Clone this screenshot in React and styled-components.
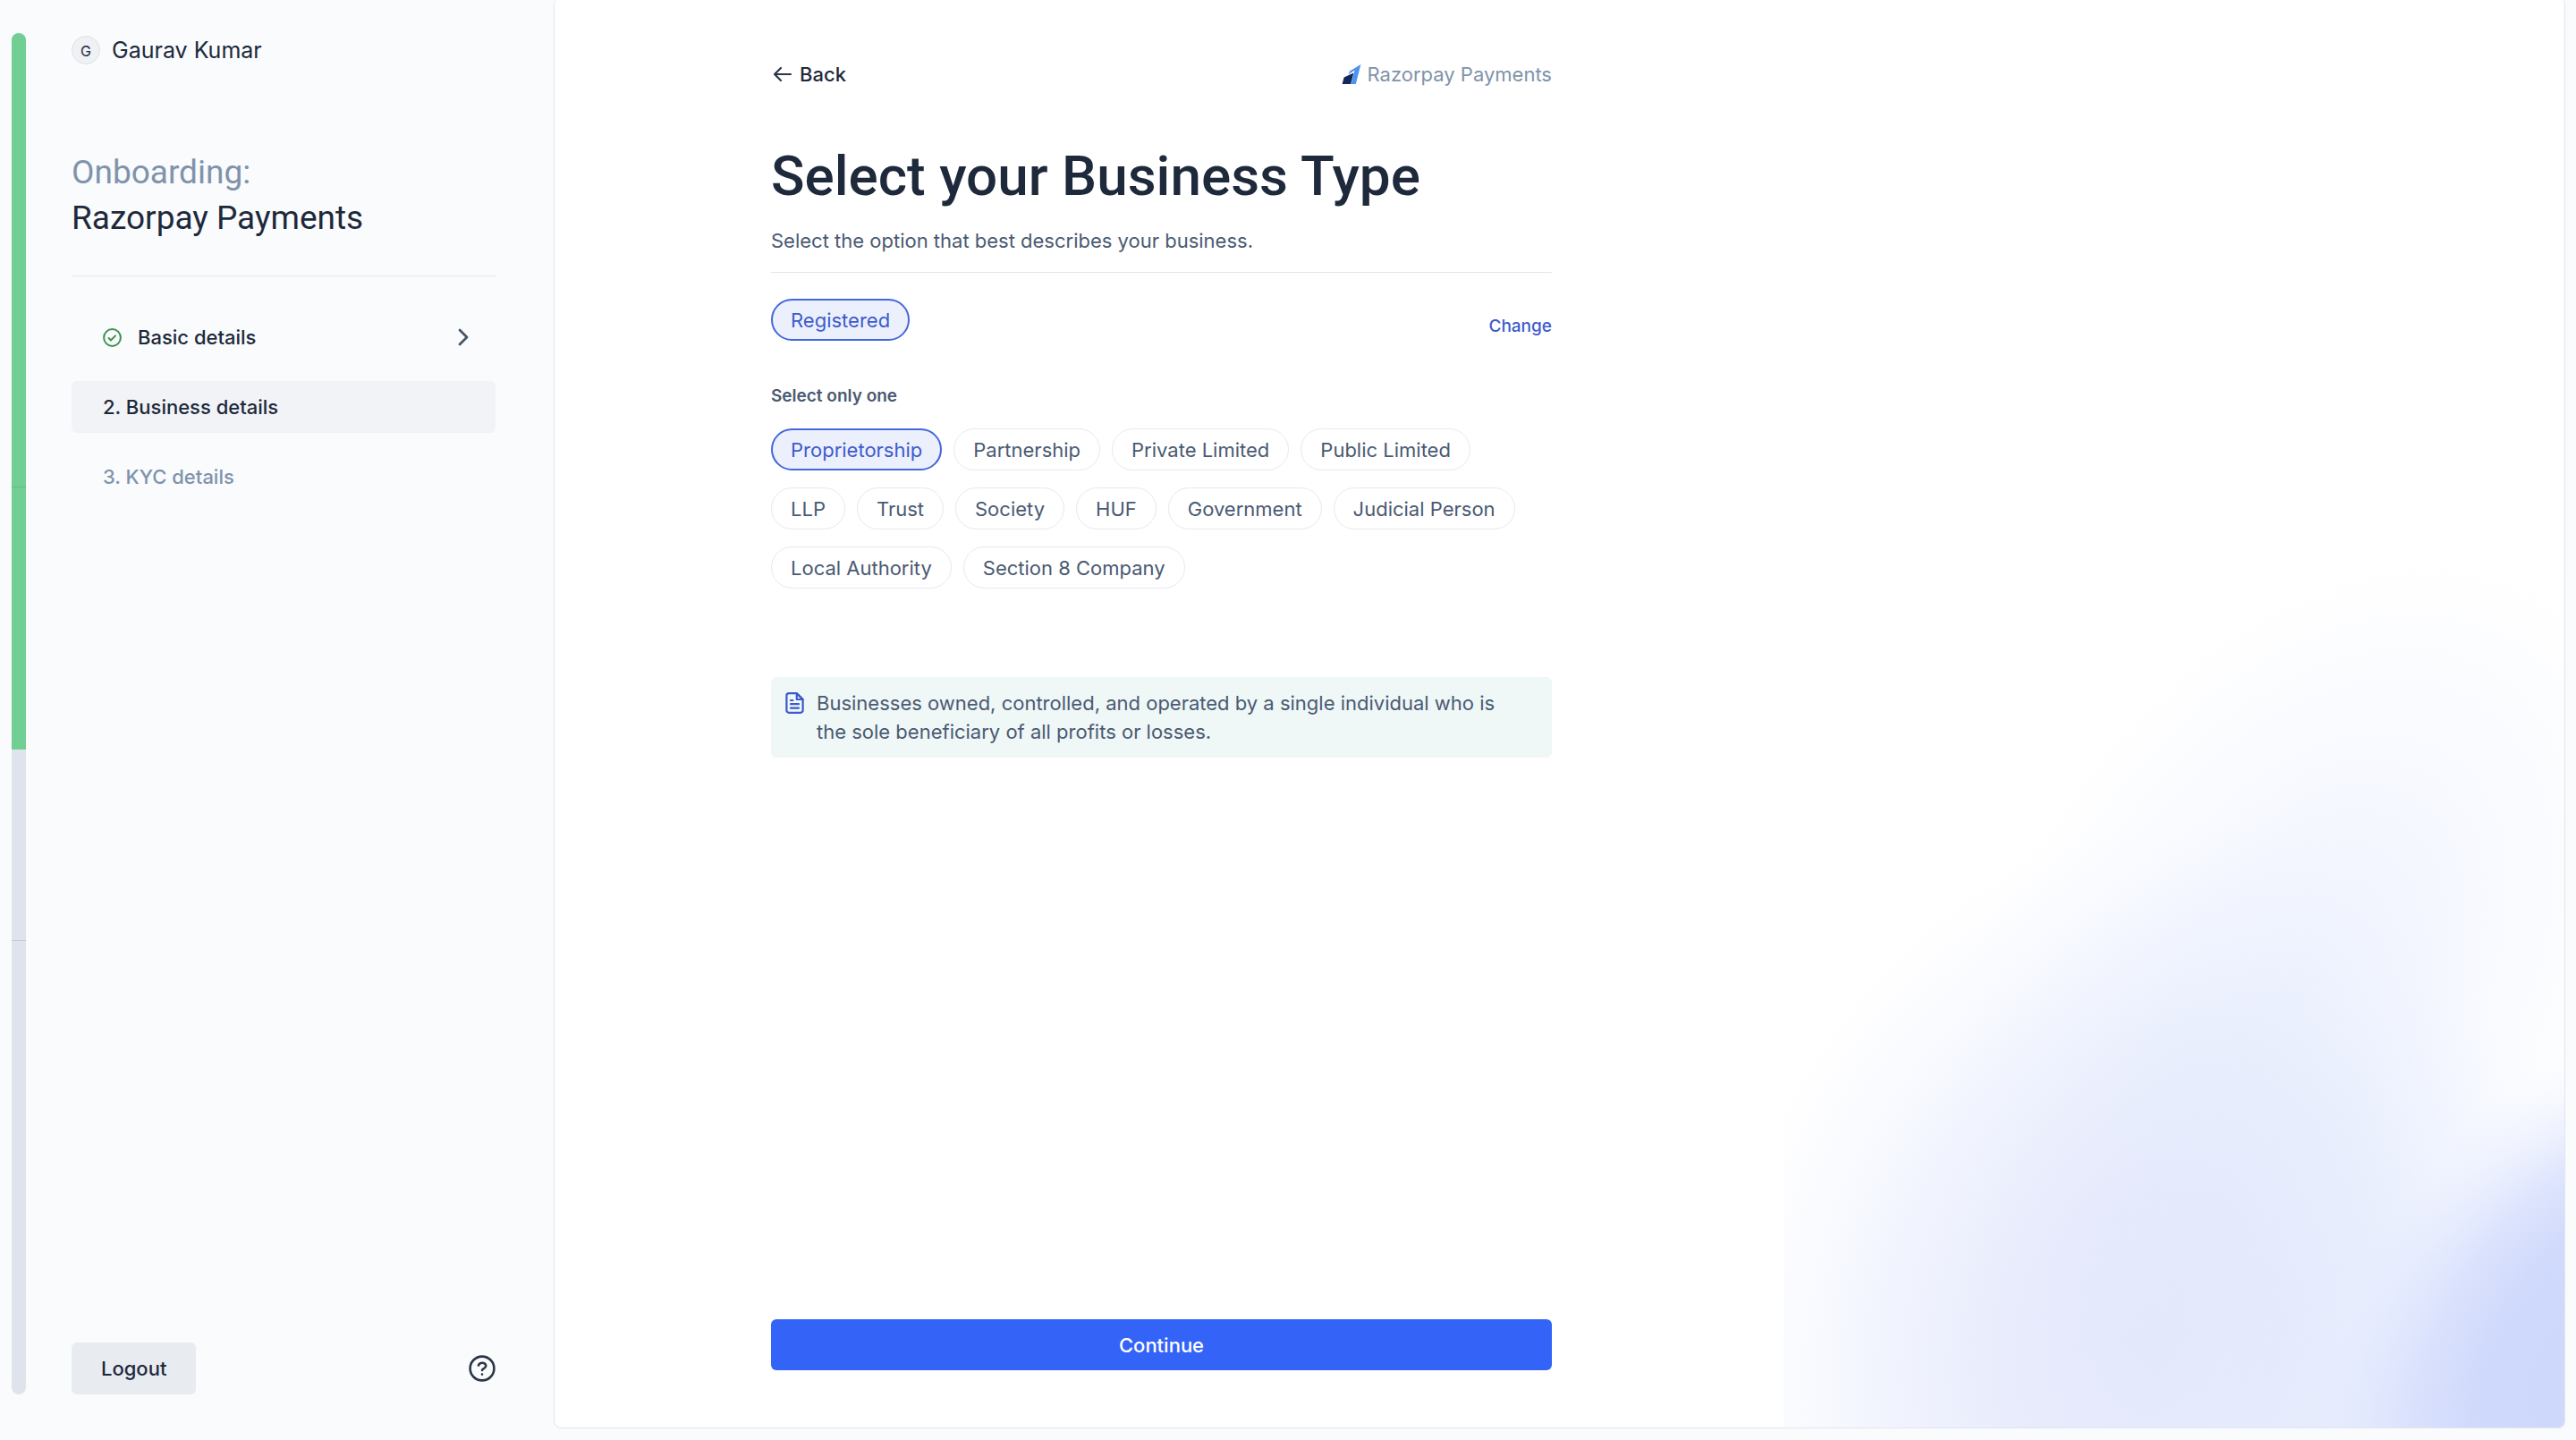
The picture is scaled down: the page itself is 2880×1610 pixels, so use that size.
import React, { useState } from 'react';
import styled, { createGlobalStyle, css } from 'styled-components';

const color = {
  page: '#f9fbfd',
  ink: '#1e293b',
  slate: '#4a5a72',
  muted: '#8093ab',
  line: '#e2e6ed',
  blue: '#3d5bcc',
  primary: '#3463f7',
};

const GlobalStyle = createGlobalStyle`
  *, *::before, *::after { box-sizing: border-box; }
  body {
    margin: 0;
    background: ${color.page};
    color: ${color.ink};
    font: 400 22px/32px Inter, "Liberation Sans", sans-serif;
  }
  button, input { font: inherit; color: inherit; }
  a { color: inherit; text-decoration: none; }
  h1, h2, p, ul, ol { margin: 0; padding: 0; list-style: none; }
`;

const Page = styled.div`
  display: flex;
  min-height: 100vh;
`;

const Sidebar = styled.aside`
  display: flex;
  flex: 0 0 619px;
  gap: 51px;
  padding: 37px 65px 51px 13px;
`;

const Rail = styled.div`
  position: relative;
  display: flex;
  flex-direction: column;
  width: 16px;
  border-radius: 8px;
  overflow: hidden;
  background: #dfe4ec;
`;

const RailFill = styled.div`
  position: absolute;
  inset: 0 0 auto;
  background: #72cf94;
`;

const RailStep = styled.div`
  position: relative;
  flex: 1;
  & + & { border-top: 1px solid rgba(70, 90, 120, 0.18); }
`;

const SidebarBody = styled.div`
  display: flex;
  flex: 1;
  flex-direction: column;
  padding-top: 3px;
`;

const User = styled.div`
  display: flex;
  align-items: center;
  gap: 13px;
  font-size: 25px;
`;

const Avatar = styled.span`
  display: grid;
  place-items: center;
  width: 32px;
  height: 32px;
  border: 1px solid #dde1e8;
  border-radius: 50%;
  background: #eff1f5;
  font-size: 16px;
`;

const FlowTitle = styled.h2`
  margin-top: 95px;
  padding-bottom: 39px;
  border-bottom: 1px solid ${color.line};
  font: 400 37px/51px Roboto, "Liberation Sans", sans-serif;
`;

const FlowLabel = styled.span`
  display: block;
  color: ${color.muted};
`;

const Steps = styled.ol`
  display: flex;
  flex-direction: column;
  gap: 20px;
  margin-top: 39px;
`;

const StepLink = styled.a`
  display: flex;
  align-items: center;
  gap: 18px;
  height: 58px;
  padding: 0 30px 0 35px;
  border-radius: 6px;
  font-weight: 500;
  ${(p) => p.$state === 'current' && css`background: #f1f3f6;`}
  ${(p) => p.$state === 'upcoming' && css`color: ${color.muted};`}
`;

const StepName = styled.span`
  flex: 1;
`;

const SidebarFooter = styled.div`
  display: flex;
  align-items: center;
  justify-content: space-between;
  margin-top: auto;
`;

const Button = styled.button`
  height: ${(p) => (p.$primary ? 57 : 58)}px;
  padding: 0 33px;
  border: 0;
  border-radius: 6px;
  background: ${(p) => (p.$primary ? color.primary : '#e8ebf0')};
  color: ${(p) => (p.$primary ? '#fff' : color.ink)};
  font-weight: 500;
  cursor: pointer;
`;

const IconButton = styled.button`
  display: flex;
  padding: 0;
  border: 0;
  background: none;
  cursor: pointer;
`;

const Panel = styled.main`
  position: relative;
  display: flex;
  flex: 1;
  margin: 0 12px 13px 0;
  padding: 67px 242px 64px;
  border: 1px solid ${color.line};
  border-top: 0;
  border-radius: 4px 4px 8px 8px;
  background: #fff;
  overflow: hidden;
`;

const Glow = styled.svg`
  position: absolute;
  right: 0;
  bottom: 0;
  width: 873px;
  height: 1040px;
`;

const Form = styled.form`
  position: relative;
  display: flex;
  flex: 0 1 873px;
  flex-direction: column;
`;

const TopBar = styled.header`
  display: flex;
  align-items: center;
  justify-content: space-between;
`;

const BackLink = styled.a`
  display: flex;
  align-items: center;
  gap: 7px;
  font-weight: 500;
`;

const Brand = styled.span`
  display: flex;
  align-items: center;
  gap: 7px;
  color: ${color.muted};
`;

const Title = styled.h1`
  margin-top: 62px;
  font: 500 62px/72px Roboto, "Liberation Sans", sans-serif;
`;

const Intro = styled.p`
  margin-top: 20px;
  padding-bottom: 19px;
  border-bottom: 1px solid ${color.line};
  color: ${color.slate};
`;

const Category = styled.div`
  display: flex;
  align-items: flex-end;
  justify-content: space-between;
  margin-top: 29px;
`;

const ChangeLink = styled.a`
  color: ${color.blue};
  font-size: 19px;
  font-weight: 500;
`;

const Choices = styled.fieldset`
  min-width: 0;
  margin: 48px 0 0;
  padding: 0;
  border: 0;
`;

const Legend = styled.legend`
  padding: 0;
  color: ${color.slate};
  font-size: 19px;
  font-weight: 600;
  line-height: 28px;
`;

const PillList = styled.div`
  display: flex;
  flex-wrap: wrap;
  gap: 19px 13px;
  margin-top: 22px;
`;

const pill = css`
  display: inline-flex;
  align-items: center;
  height: 47px;
  padding: 0 21px;
  border: 1px solid #e6e9ef;
  border-radius: 24px;
  background: #fff;
  color: ${color.slate};
  cursor: pointer;
`;

const pillOn = css`
  padding: 0 20px;
  border: 2px solid #4467dc;
  background: #ecf0fd;
  color: ${color.blue};
`;

const PillButton = styled.button`
  ${pill}
  ${pillOn}
`;

const PillLabel = styled.label`
  ${pill}
  &:has(input:checked) { ${pillOn} }
`;

const PillInput = styled.input`
  position: absolute;
  width: 1px;
  height: 1px;
  margin: 0;
  opacity: 0;
`;

const Note = styled.p`
  display: flex;
  align-items: flex-start;
  gap: 14px;
  margin-top: 99px;
  padding: 13px 48px 13px 16px;
  border-radius: 6px;
  background: #eff7f7;
  color: ${color.slate};
`;

const NoteIcon = styled.svg`
  flex: none;
  margin-top: 4px;
`;

const Actions = styled.div`
  display: grid;
  margin-top: auto;
`;

const types = [
  'Proprietorship', 'Partnership', 'Private Limited', 'Public Limited',
  'LLP', 'Trust', 'Society', 'HUF', 'Government', 'Judicial Person',
  'Local Authority', 'Section 8 Company',
];

const CheckIcon = () => (
  <svg width="21" height="21" viewBox="0 0 21 21" fill="none" stroke="#3f8f4f" strokeWidth="2" strokeLinecap="round" strokeLinejoin="round" aria-hidden="true">
    <circle cx="10.5" cy="10.5" r="9.4" />
    <path d="M6.6 11l2.3 2.5 5.1-5.1" />
  </svg>
);

const ChevronIcon = () => (
  <svg width="12" height="20" viewBox="0 0 12 20" fill="none" stroke="#475569" strokeWidth="2.8" strokeLinecap="round" strokeLinejoin="round" aria-hidden="true">
    <path d="M2 2l8 8-8 8" />
  </svg>
);

const HelpIcon = () => (
  <svg width="30" height="30" viewBox="0 0 30 30" fill="none" stroke="#2b3648" strokeWidth="2.6" strokeLinecap="round" strokeLinejoin="round" aria-hidden="true">
    <circle cx="15" cy="15" r="13.4" />
    <path d="M11 11.5c.6-1.8 2-2.8 4-2.8 2.4 0 4.2 1.4 4.2 3.6 0 2.8-4.2 3.2-4.2 4.7" />
    <circle cx="15" cy="21.6" r="1.3" fill="#2b3648" stroke="none" />
  </svg>
);

const ArrowIcon = () => (
  <svg width="25" height="20" viewBox="0 0 25 20" fill="none" stroke="#2b3648" strokeWidth="2.2" strokeLinecap="round" strokeLinejoin="round" aria-hidden="true">
    <path d="M22 10H4M11 3l-7 7 7 7" />
  </svg>
);

const BrandMark = () => (
  <svg width="22" height="22" viewBox="0 0 22 22" aria-hidden="true">
    <path d="M9 7.6L21.4 0l-5.6 22h-5.2l3.9-15.4L7.5 11.2z" fill="#4f92f0" />
    <path d="M2.6 14.6L13.4 9.4 10.2 22H.6z" fill="#12275a" />
  </svg>
);

const DocumentIcon = () => (
  <NoteIcon width="21" height="24" viewBox="0 0 21 24" fill="none" stroke="#3a5ad0" strokeWidth="2.2" strokeLinecap="round" strokeLinejoin="round" aria-hidden="true">
    <path d="M12.8 1.2H4a2.6 2.6 0 0 0-2.6 2.6v16.4A2.6 2.6 0 0 0 4 22.8h13a2.6 2.6 0 0 0 2.6-2.6V8z" />
    <path d="M12.8 1.2V8h6.8z" />
    <path d="M6 9h2.4M6 13.2h9M6 17.6h9" />
  </NoteIcon>
);

const Backdrop = () => (
  <Glow viewBox="0 0 873 1040" aria-hidden="true">
    <defs>
      <radialGradient id="haze">
        <stop offset="0" stopColor="#dfe7fd" stopOpacity="0.46" />
        <stop offset="0.35" stopColor="#dfe7fd" stopOpacity="0.34" />
        <stop offset="0.7" stopColor="#e2eafe" stopOpacity="0.14" />
        <stop offset="1" stopColor="#eef2ff" stopOpacity="0" />
      </radialGradient>
      <radialGradient id="core">
        <stop offset="0" stopColor="#d9dffa" stopOpacity="0.72" />
        <stop offset="0.3" stopColor="#d9dffa" stopOpacity="0.62" />
        <stop offset="0.6" stopColor="#dbe3fc" stopOpacity="0.38" />
        <stop offset="0.85" stopColor="#e2e8fe" stopOpacity="0.12" />
        <stop offset="1" stopColor="#eef2ff" stopOpacity="0" />
      </radialGradient>
      <radialGradient id="corner">
        <stop offset="0" stopColor="#cdd7fb" />
        <stop offset="0.45" stopColor="#ced8fb" stopOpacity="0.94" />
        <stop offset="0.65" stopColor="#d0d9fc" stopOpacity="0.66" />
        <stop offset="0.85" stopColor="#d6defd" stopOpacity="0.22" />
        <stop offset="1" stopColor="#dfe5fd" stopOpacity="0" />
      </radialGradient>
    </defs>
    <ellipse rx="350" ry="540" fill="url(#haze)" transform="translate(580 540) rotate(32)" />
    <ellipse rx="490" ry="600" fill="url(#core)" transform="translate(405 950) rotate(12)" />
    <ellipse rx="350" ry="460" fill="url(#haze)" transform="translate(670 1000)" />
    <ellipse rx="290" ry="430" fill="url(#corner)" transform="translate(925 965) rotate(34)" />
  </Glow>
);

export default function App() {
  const [type, setType] = useState(types[0]);

  return (
    <Page>
      <GlobalStyle />
      <Sidebar>
        <Rail>
          <RailFill style={{ height: '52.6%' }} />
          <RailStep />
          <RailStep />
          <RailStep />
        </Rail>
        <SidebarBody>
          <User>
            <Avatar>G</Avatar>
            Gaurav Kumar
          </User>
          <FlowTitle>
            <FlowLabel>Onboarding:</FlowLabel>
            Razorpay Payments
          </FlowTitle>
          <nav>
            <Steps>
              <li>
                <StepLink href="#basic" $state="done">
                  <CheckIcon />
                  <StepName>Basic details</StepName>
                  <ChevronIcon />
                </StepLink>
              </li>
              <li>
                <StepLink href="#business" $state="current" aria-current="step">
                  <StepName>2. Business details</StepName>
                </StepLink>
              </li>
              <li>
                <StepLink href="#kyc" $state="upcoming">
                  <StepName>3. KYC details</StepName>
                </StepLink>
              </li>
            </Steps>
          </nav>
          <SidebarFooter>
            <Button type="button">Logout</Button>
            <IconButton type="button" aria-label="Help">
              <HelpIcon />
            </IconButton>
          </SidebarFooter>
        </SidebarBody>
      </Sidebar>

      <Panel>
        <Backdrop />
        <Form onSubmit={(e) => e.preventDefault()}>
          <TopBar>
            <BackLink href="#back">
              <ArrowIcon />
              Back
            </BackLink>
            <Brand>
              <BrandMark />
              Razorpay Payments
            </Brand>
          </TopBar>
          <Title>Select your Business Type</Title>
          <Intro>Select the option that best describes your business.</Intro>
          <Category>
            <PillButton type="button" aria-pressed="true">Registered</PillButton>
            <ChangeLink href="#change">Change</ChangeLink>
          </Category>
          <Choices>
            <Legend>Select only one</Legend>
            <PillList>
              {types.map((name) => (
                <PillLabel key={name}>
                  <PillInput
                    type="radio"
                    name="business-type"
                    checked={type === name}
                    onChange={() => setType(name)}
                  />
                  {name}
                </PillLabel>
              ))}
            </PillList>
          </Choices>
          <Note>
            <DocumentIcon />
            Businesses owned, controlled, and operated by a single individual who is the sole
            beneficiary of all profits or losses.
          </Note>
          <Actions>
            <Button $primary type="submit">Continue</Button>
          </Actions>
        </Form>
      </Panel>
    </Page>
  );
}
